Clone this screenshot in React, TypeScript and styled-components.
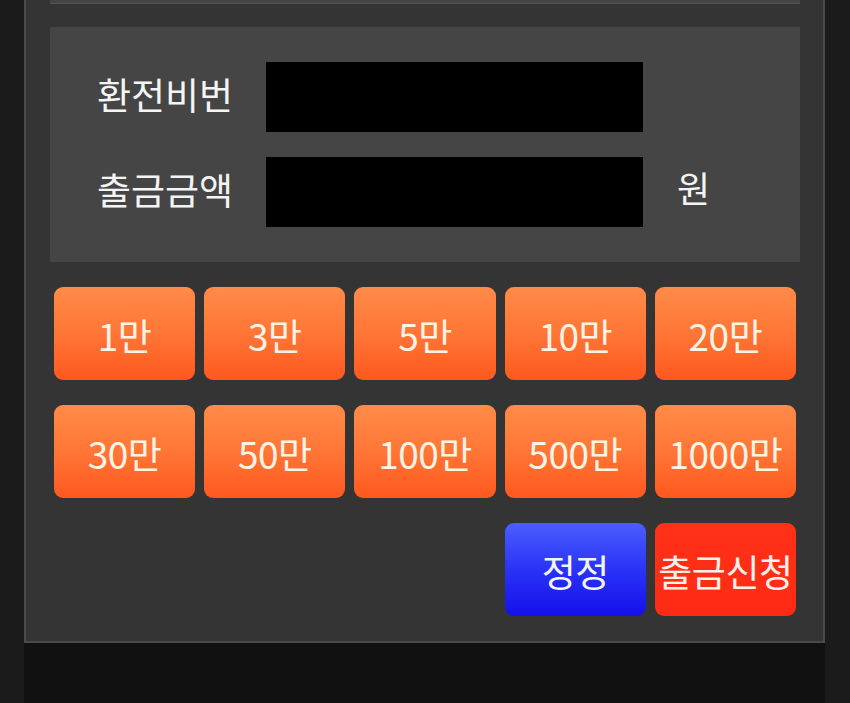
import React from "react";
import styled, { createGlobalStyle, css } from "styled-components";

const GlobalStyle = createGlobalStyle`
  html, body {
    margin: 0;
    padding: 0;
    background: #1b1b1b;
  }
  body {
    font-family: "Noto Sans CJK KR", "Noto Sans", sans-serif;
  }
`;

const Shell = styled.div`
  width: 801px;
  height: 703px;
  margin-left: 24px;
  background: #111111;
  display: flex;
  flex-direction: column;
`;

const Panel = styled.div`
  background: #343434;
  border: 2px solid #4a4a4a;
  border-top: none;
  padding: 0 23px 25px 24px;
  display: flex;
  flex-direction: column;
`;

const TopStub = styled.div`
  height: 3px;
  background: #454545;
  border-bottom: 1px solid #555555;
  margin-bottom: 23px;
`;

const FormBox = styled.div`
  background: #454545;
  padding: 35px 0;
  display: grid;
  grid-template-columns: 216px 377px auto;
  grid-auto-rows: 70px;
  row-gap: 25px;
  align-items: center;
`;

const Label = styled.div`
  padding-left: 47px;
  color: #f4f4f4;
  font-size: 37px;
  line-height: 1;
  margin-top: -6px;
`;

const Field = styled.div`
  height: 70px;
  background: #000000;
`;

const Unit = styled.div`
  padding-left: 34px;
  color: #f4f4f4;
  font-size: 36px;
  line-height: 1;
  margin-top: -10px;
`;

const ButtonGrid = styled.div`
  margin-top: 25px;
  padding: 0 4px;
  display: grid;
  grid-template-columns: repeat(5, 1fr);
  grid-auto-rows: 93px;
  column-gap: 9px;
  row-gap: 25px;
`;

type Tone = "orange" | "blue" | "red";

const tones: Record<Tone, ReturnType<typeof css>> = {
  orange: css`
    background: linear-gradient(180deg, #ff8b48 0%, #ff7636 50%, #ff581f 100%);
    color: #fff4e6;
  `,
  blue: css`
    background: linear-gradient(180deg, #4a5eff 0%, #2a33f6 50%, #1410ea 100%);
    color: #f4f4ff;
  `,
  red: css`
    background: linear-gradient(180deg, #ff3118 0%, #fe2b14 100%);
    color: #fff0ea;
  `,
};

const Button = styled.button<{ $tone: Tone; $col?: number }>`
  border: none;
  border-radius: 9px;
  font-family: "Noto Sans CJK KR", "Noto Sans", sans-serif;
  font-size: 37px;
  line-height: 1;
  padding: 4px 0 0;
  white-space: nowrap;
  letter-spacing: -0.5px;
  display: flex;
  align-items: center;
  justify-content: center;
  ${({ $tone }) => tones[$tone]}
  ${({ $col }) =>
    $col
      ? css`
          grid-column: ${$col};
        `
      : ""}
`;

const amounts = ["1만", "3만", "5만", "10만", "20만", "30만", "50만", "100만", "500만", "1000만"];

export default function App() {
  return (
    <>
      <GlobalStyle />
      <Shell>
        <Panel>
          <TopStub />
          <FormBox>
            <Label>환전비번</Label>
            <Field />
            <span />
            <Label>출금금액</Label>
            <Field />
            <Unit>원</Unit>
          </FormBox>
          <ButtonGrid>
            {amounts.map((a) => (
              <Button key={a} $tone="orange">
                {a}
              </Button>
            ))}
            <Button $tone="blue" $col={4}>
              정정
            </Button>
            <Button $tone="red">출금신청</Button>
          </ButtonGrid>
        </Panel>
      </Shell>
    </>
  );
}
